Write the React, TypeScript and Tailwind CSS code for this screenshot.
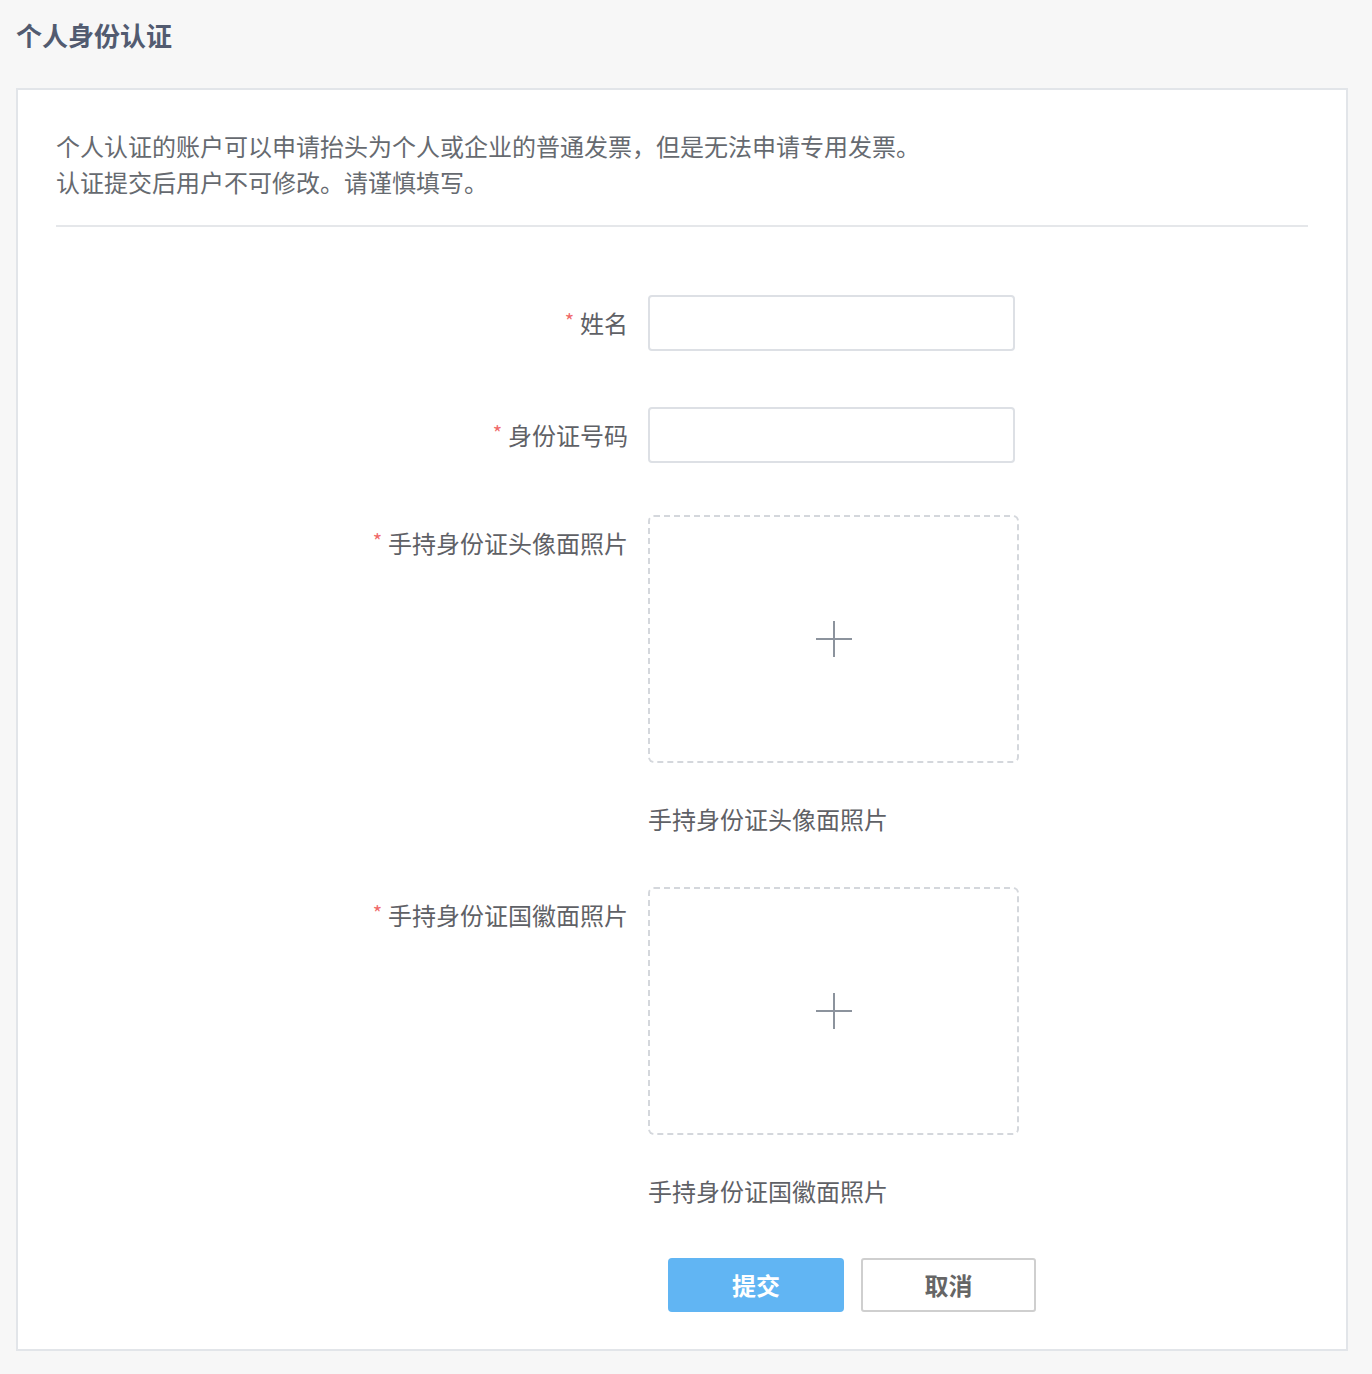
import React from "react";

const font = { fontFamily: '"Noto Sans CJK SC", "Noto Sans", sans-serif' };

function Label({ text }: { text: string }) {
  return (
    <div className="w-[592px] shrink-0 pr-[20px] h-[56px] flex items-center justify-end text-[24px] text-[#5f6166]">
      <span className="text-[#f06a6a] text-[20px] mr-[6px] -mt-[4px]">*</span>
      <span>{text}</span>
    </div>
  );
}

function Upload({ caption }: { caption: string }) {
  return (
    <div className="flex flex-col">
      <div className="w-[371px] h-[248px] rounded-[6px] border-2 border-dashed border-[#d4d7dc] flex items-center justify-center">
        <svg width="40" height="40" viewBox="0 0 40 40">
          <path d="M20 2v36M2 20h36" stroke="#8c939d" strokeWidth="2" />
        </svg>
      </div>
      <div className="mt-[38px] h-[36px] leading-[36px] text-[24px] text-[#5f6166]">{caption}</div>
    </div>
  );
}

export default function App() {
  return (
    <div className="min-h-[1374px] bg-[#f7f7f7] pl-[16px] pr-[24px] pt-[16px]" style={font}>
      <div className="h-[38px] leading-[38px] text-[26px] font-semibold text-[#525b70]">个人身份认证</div>
      <div className="mt-[34px] bg-white border-2 border-[#e2e5e9] px-[38px] pt-[38px] pb-[37px]">
        <div className="text-[24px] leading-[36px] text-[#666a70]">
          <div>个人认证的账户可以申请抬头为个人或企业的普通发票，但是无法申请专用发票。</div>
          <div>认证提交后用户不可修改。请谨慎填写。</div>
        </div>
        <div className="mt-[25px] h-[2px] bg-[#e5e7ea]" />
        <div className="mt-[68px] flex flex-col">
          <div className="flex">
            <Label text="姓名" />
            <div className="w-[367px] h-[56px] rounded-[4px] border-2 border-[#dde0e5] bg-white" />
          </div>
          <div className="flex mt-[56px]">
            <Label text="身份证号码" />
            <div className="w-[367px] h-[56px] rounded-[4px] border-2 border-[#dde0e5] bg-white" />
          </div>
          <div className="flex mt-[52px]">
            <Label text="手持身份证头像面照片" />
            <Upload caption="手持身份证头像面照片" />
          </div>
          <div className="flex mt-[50px]">
            <Label text="手持身份证国徽面照片" />
            <Upload caption="手持身份证国徽面照片" />
          </div>
          <div className="flex mt-[49px]">
            <div className="w-[612px] shrink-0" />
            <button className="w-[176px] h-[54px] rounded-[4px] bg-[#61b5f3] text-white text-[24px] font-bold">提交</button>
            <button className="ml-[17px] w-[175px] h-[54px] rounded-[3px] border-2 border-[#cfcfcf] bg-white text-[#666] text-[24px] font-bold">取消</button>
          </div>
        </div>
      </div>
    </div>
  );
}
